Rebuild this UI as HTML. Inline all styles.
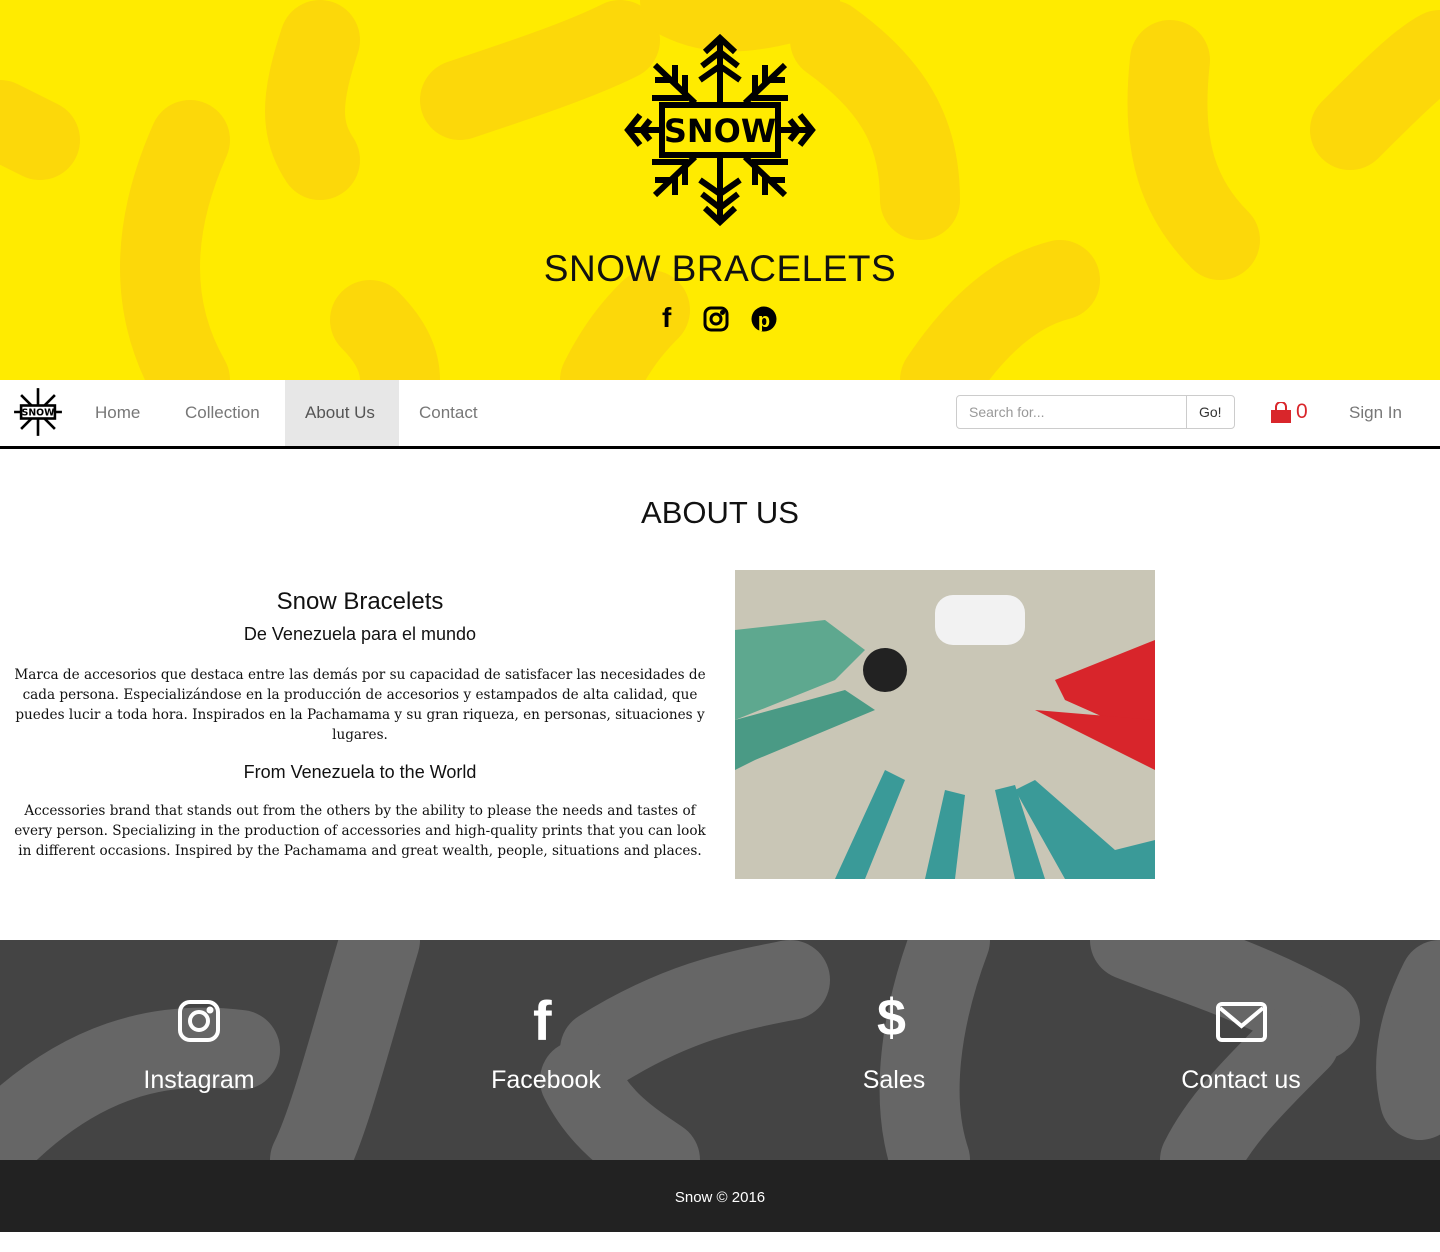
<!DOCTYPE html>
<html><head><meta charset="utf-8"><style>
*{margin:0;padding:0;box-sizing:border-box}
body{width:1440px;height:1252px;position:relative;background:#fff;font-family:"Liberation Sans",sans-serif;overflow:hidden}
.abs{position:absolute}
.hdr{left:0;top:0;width:1440px;height:380px;background:#ffeb00;overflow:hidden}
.nav{left:0;top:380px;width:1440px;background:#fff;border-bottom:3px solid #000;height:69px}
.nav a{position:absolute;top:23px;font-size:17px;color:#777;text-decoration:none}
p.t{font-family:"DejaVu Serif",serif;font-size:13.6px;line-height:20px;color:#111;text-align:center}
</style></head><body>
<div class="abs hdr">
<svg width="1440" height="380" style="position:absolute;left:0;top:0" fill="none" stroke="#fcd80a" stroke-linecap="round" stroke-width="80">
<path d="M190 140 C150 230 150 310 190 380"/>
<path d="M320 40 C300 100 300 130 320 160"/>
<path d="M460 100 C520 80 580 60 620 40"/>
<path d="M680 0 C720 20 760 10 800 0"/>
<path d="M830 40 C900 90 920 140 920 200"/>
<path d="M1170 60 C1160 150 1180 200 1220 240"/>
<path d="M1350 130 C1390 90 1420 60 1440 50"/>
<path d="M940 380 C980 320 1020 290 1060 280"/>
<path d="M600 380 C620 340 640 320 650 310"/>
<path d="M370 320 C390 340 400 360 400 380"/>
<path d="M0 120 L40 140"/>
</svg>
<svg class="abs" style="left:620px;top:30px" width="200" height="200" viewBox="0 0 200 200" fill="none" stroke="#000" stroke-width="6">
<path d="M100 8 V73 M100 127 V192 M8 100 H40 M160 100 H192"/>
<path d="M85 22 L100 8 L115 22 M82 36 L100 22 L118 36 M80 50 L100 36 L120 50"/>
<path d="M85 178 L100 192 L115 178 M82 164 L100 178 L118 164 M80 150 L100 164 L120 150"/>
<path d="M20 85 L8 100 L20 115 M30 90 L22 100 L30 110"/>
<path d="M180 85 L192 100 L180 115 M170 90 L178 100 L170 110"/>
<path d="M35 35 L75 73 M165 35 L125 73 M35 165 L75 127 M165 165 L125 127"/>
<path d="M35 50 H55 V35 M32 68 H65 V45 M165 50 H145 V35 M168 68 H135 V45 M35 150 H55 V165 M32 132 H65 V155 M165 150 H145 V165 M168 132 H135 V155"/>
<rect x="42" y="75" width="116" height="50" fill="#ffeb00"/>
<text x="100" y="112" text-anchor="middle" font-family="DejaVu Sans" font-weight="bold" font-size="32" fill="#000" stroke="none">SNOW</text>
</svg>
<div class="abs" style="left:0;width:1440px;top:248px;text-align:center;font-size:37px;color:#111;letter-spacing:0.5px">SNOW BRACELETS</div>
<div class="abs" style="left:662px;top:302px;font-size:28px;font-weight:bold;color:#000">f</div>
<svg class="abs" style="left:703px;top:306px" width="26" height="26" viewBox="0 0 26 26" fill="none" stroke="#000" stroke-width="3"><rect x="2" y="2" width="22" height="22" rx="6"/><circle cx="13" cy="13" r="5"/><circle cx="19.5" cy="6.5" r="1" fill="#000"/></svg>
<svg class="abs" style="left:751px;top:306px" width="26" height="26" viewBox="0 0 26 26"><circle cx="13" cy="13" r="12.5" fill="#000"/><text x="13" y="21" text-anchor="middle" font-size="20" font-weight="bold" fill="#ffeb00" font-family="Liberation Sans">p</text></svg>
</div>
<div class="abs nav">
<svg class="abs" style="left:12px;top:6px" width="52" height="52" viewBox="0 0 200 200" fill="none" stroke="#000" stroke-width="10"><path d="M100 8 V192 M8 100 H192 M35 35 L165 165 M165 35 L35 165"/><rect x="35" y="75" width="130" height="50" fill="#fff"/><text x="100" y="113" text-anchor="middle" font-family="DejaVu Sans" font-weight="bold" font-size="36" fill="#000" stroke="none">SNOW</text></svg>
<a style="left:95px">Home</a><a style="left:185px">Collection</a>
<div class="abs" style="left:285px;top:0;width:114px;height:66px;background:#e7e7e7"></div>
<a style="left:305px;color:#555">About Us</a><a style="left:419px">Contact</a>
<div class="abs" style="left:956px;top:15px;width:279px;height:34px;border:1px solid #ccc;border-radius:4px"></div>
<div class="abs" style="left:1186px;top:15px;width:1px;height:34px;background:#ccc"></div>
<div class="abs" style="left:969px;top:24px;font-size:14px;color:#999">Search for...</div>
<div class="abs" style="left:1199px;top:24px;font-size:14px;color:#333">Go!</div>
<svg class="abs" style="left:1270px;top:22px" width="22" height="22" viewBox="0 0 22 22"><rect x="1" y="8" width="20" height="13" fill="#d9262b"/><path d="M6 9 V5 A5 5 0 0 1 16 5 V9" fill="none" stroke="#d9262b" stroke-width="2"/></svg>
<div class="abs" style="left:1296px;top:20px;font-size:21px;color:#d9262b">0</div>
<a style="left:1349px">Sign In</a>
</div>
<div class="abs" style="left:0;width:1440px;top:495px;text-align:center;font-size:31px;color:#111">ABOUT US</div>
<div class="abs" style="left:10px;width:700px;top:588px">
<div style="text-align:center;font-size:24px;color:#111">Snow Bracelets</div>
<div style="text-align:center;font-size:18px;color:#111;margin-top:8px">De Venezuela para el mundo</div>
<p class="t" style="margin-top:20px">Marca de accesorios que destaca entre las demás por su capacidad de satisfacer las necesidades de cada persona. Especializándose en la producción de accesorios y estampados de alta calidad, que puedes lucir a toda hora. Inspirados en la Pachamama y su gran riqueza, en personas, situaciones y lugares.</p>
<div style="text-align:center;font-size:18px;color:#111;margin-top:17px">From Venezuela to the World</div>
<p class="t" style="margin-top:18px">Accessories brand that stands out from the others by the ability to please the needs and tastes of every person. Specializing in the production of accessories and high-quality prints that you can look in different occasions. Inspired by the Pachamama and great wealth, people, situations and places.</p>
</div>
<svg class="abs" style="left:735px;top:570px" width="420" height="309" viewBox="0 0 420 309">
<rect width="420" height="309" fill="#c9c6b6"/>
<path d="M0 60 L90 50 L130 80 L100 110 L0 150Z" fill="#5ea88f"/>
<path d="M0 150 L110 120 L140 140 L20 190 L0 200Z" fill="#4a9a85"/>
<rect x="200" y="25" width="90" height="50" rx="18" fill="#f2f2f2"/>
<path d="M320 110 L420 70 L420 170 L330 130Z" fill="#d8252b"/>
<path d="M300 140 L420 200 L420 150Z" fill="#d8252b"/>
<path d="M100 309 L150 200 L170 210 L130 309Z" fill="#3a9a98"/>
<path d="M190 309 L210 220 L230 225 L220 309Z" fill="#3a9a98"/>
<path d="M280 309 L260 220 L280 215 L310 309Z" fill="#3a9a98"/>
<path d="M330 309 L280 220 L300 210 L380 280 L420 270 L420 309Z" fill="#3a9a98"/>
<circle cx="150" cy="100" r="22" fill="#222"/>
</svg>
<div class="abs" style="left:0;top:940px;width:1440px;height:220px;background:#444;overflow:hidden">
<svg width="1440" height="220" fill="none" stroke="#666" stroke-linecap="round" stroke-width="80">
<path d="M0 200 C80 120 160 100 240 110"/><path d="M380 0 C350 100 330 180 310 220"/>
<path d="M600 110 C680 60 740 50 790 40"/><path d="M580 140 C600 180 630 200 660 220"/>
<path d="M950 0 C920 80 910 160 930 220"/><path d="M1130 0 C1180 20 1250 40 1320 80"/>
<path d="M1300 100 C1250 150 1220 180 1200 220"/><path d="M1440 40 C1420 80 1410 120 1420 160"/>
</svg>
</div>
<svg class="abs" style="left:177px;top:999px" width="44" height="44" viewBox="0 0 44 44" fill="none" stroke="#fff" stroke-width="4"><rect x="3" y="3" width="38" height="38" rx="10"/><circle cx="22" cy="22" r="9"/><circle cx="33" cy="11" r="1.5" fill="#fff"/></svg>
<div class="abs" style="left:533px;top:988px;font-size:56px;font-weight:bold;color:#fff">f</div>
<div class="abs" style="left:877px;top:988px;font-size:52px;font-weight:bold;color:#fff">$</div>
<svg class="abs" style="left:1216px;top:1002px" width="51" height="40" viewBox="0 0 51 40" fill="none" stroke="#fff" stroke-width="4"><rect x="2" y="2" width="47" height="36" rx="4"/><path d="M4 6 L25.5 24 L47 6"/></svg>
<div class="abs" style="left:99px;width:200px;top:1066px;text-align:center;font-size:25px;color:#fff">Instagram</div>
<div class="abs" style="left:446px;width:200px;top:1066px;text-align:center;font-size:25px;color:#fff">Facebook</div>
<div class="abs" style="left:794px;width:200px;top:1066px;text-align:center;font-size:25px;color:#fff">Sales</div>
<div class="abs" style="left:1141px;width:200px;top:1066px;text-align:center;font-size:25px;color:#fff">Contact us</div>
<div class="abs" style="left:0;top:1160px;width:1440px;height:72px;background:#222;color:#fff;text-align:center;font-size:15px;line-height:76px">Snow © 2016</div>
</body></html>
